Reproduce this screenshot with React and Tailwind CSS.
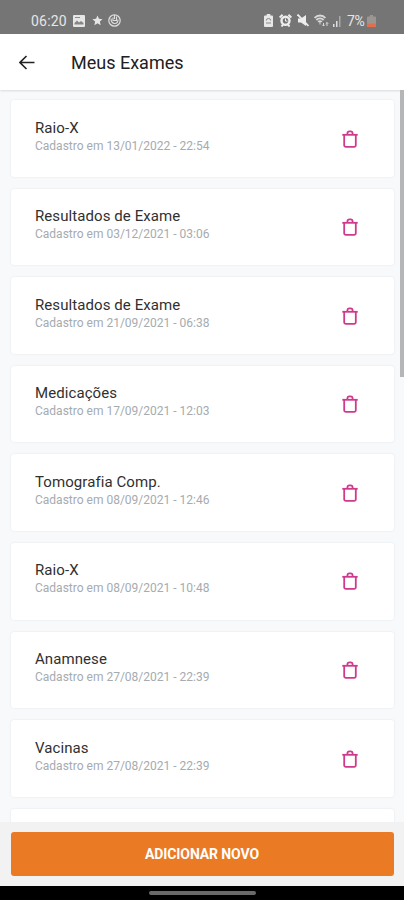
const exams = [
  { id: 1, title: "Raio-X", date: "13/01/2022 - 22:54" },
  { id: 2, title: "Resultados de Exame", date: "03/12/2021 - 03:06" },
  { id: 3, title: "Resultados de Exame", date: "21/09/2021 - 06:38" },
  { id: 4, title: "Medicações", date: "17/09/2021 - 12:03" },
  { id: 5, title: "Tomografia Comp.", date: "08/09/2021 - 12:46" },
  { id: 6, title: "Raio-X", date: "08/09/2021 - 10:48" },
  { id: 7, title: "Anamnese", date: "27/08/2021 - 22:39" },
  { id: 8, title: "Vacinas", date: "27/08/2021 - 22:39" },
];

const TrashIcon = () => (
  <svg width="16" height="18" viewBox="0 0 16 18" fill="none" stroke="#cf3a8c" strokeWidth="1.8">
    <path d="M0.3 4.8h15.4" />
    <path d="M2.2 4.8v10.4a1.6 1.6 0 0 0 1.6 1.6h8.4a1.6 1.6 0 0 0 1.6-1.6V4.8" />
    <path d="M5.4 4.6V3.4a2.1 2.1 0 0 1 2.1-2.1h1a2.1 2.1 0 0 1 2.1 2.1v1.2" />
  </svg>
);

const StatusBar = () => (
  <div className="h-[34px] shrink-0 bg-[#757575] pl-[31px] pr-[28px] pt-[7px] flex items-center justify-between text-[#e6e6e6]">
    <div className="flex items-center">
      <span className="w-[37px] text-[14px] leading-none tracking-[0.2px]">06:20</span>
      {/* gallery */}
      <svg className="ml-[5px]" width="12" height="12" viewBox="0 0 12 12">
        <rect width="12" height="12" rx="1" fill="#e6e6e6" />
        <path d="M1.5 9.5V8L4 5.5l2 2L8 6l2.5 2v1.5z" fill="#858585" />
        <path d="M2 2.5h5" stroke="#8a8a8a" />
      </svg>
      {/* star */}
      <svg className="ml-[7px]" width="11" height="11" viewBox="0 0 12 12" fill="#e6e6e6">
        <path d="M6 .5l1.6 3.6 3.9.4-2.9 2.7.8 3.9L6 9.1l-3.4 2 .8-3.9L.5 4.5l3.9-.4z" />
      </svg>
      <svg className="ml-[5px]" width="13" height="13" viewBox="0 0 13 13" fill="none" stroke="#dedede">
        <circle cx="6.5" cy="6.5" r="5.7" strokeWidth="1.2" />
        <path d="M3 4.500c0 3 1.500 5 3.500 5s3.500-1.500 3.500-4M5 3.500v3h3.500v-4M6.500 1v4" strokeWidth="1.1" />
      </svg>
    </div>

    <div className="flex items-center">
      {/* battery saver */}
      <svg width="9" height="13" viewBox="0 0 9 13">
        <path d="M2.7 0h3.6v1.5H8A1 1 0 0 1 9 2.5V12a1 1 0 0 1-1 1H1a1 1 0 0 1-1-1V2.5a1 1 0 0 1 1-1h1.7z" fill="#e8e8e8" />
        <path d="M2.3 6.5a2.2 2 0 0 1 4.4 0M2 9h5" fill="none" stroke="#888" />
      </svg>
      {/* alarm */}
      <svg className="ml-[6px]" width="13" height="13" viewBox="0 0 13 13">
        <path d="M.6 3.5L3.6.8M12.4 3.5L9.4.8M2.5 12.5l1.5-2M10.5 12.5l-1.5-2" stroke="#ededed" strokeWidth="2" />
        <circle cx="6.5" cy="6.8" r="4" fill="#757575" stroke="#ededed" strokeWidth="2.4" />
        <path d="M6.5 4.5v2.6h2" fill="none" stroke="#ededed" />
      </svg>
      {/* muted */}
      <svg className="ml-[5px]" width="12" height="13" viewBox="0 0 12 13">
        <path d="M1 4.5h3L9 1v11L4 8.5H1z" fill="#ededed" />
        <path d="M.5.5L11.5 12" stroke="#ededed" strokeWidth="1.8" />
      </svg>
      {/* wifi */}
      <svg className="ml-[5px]" width="15" height="13" viewBox="0 0 15 13" fill="none" stroke="#d9d9d9">
        <path d="M.6 4C3.5.6 8.500.6 11.400 4M2.400 6c2-2.200 5.200-2.200 7.200 0M4.300 8c1-1.200 2.400-1.200 3.400 0" strokeWidth="1.9" />
        <path d="M6 8v2.500M9.500 12V9M8.300 10.800l1.200 1.200 1.200-1.200M13 12V8.500M11.800 9.700L13 8.500l1.200 1.200" />
      </svg>
      {/* signal */}
      <svg className="ml-[4px]" width="8" height="12" viewBox="0 0 8 12">
        <path d="M0 9h1.5v3H0zM3 6h1.5v6H3z" fill="#dedede" />
        <path d="M6 1h1.5v11H6z" fill="#a8a8a8" />
      </svg>
      <span className="ml-[6px] w-[20px] text-[14px] leading-none tracking-[-0.3px]">7%</span>
      <svg width="9" height="12" viewBox="0 0 9 12">
        <path d="M3 0h3v1.5h2A1 1 0 0 1 9 2.5V12H0V2.5a1 1 0 0 1 1-1h2z" fill="#9c9693" />
        <path d="M0 8.5h9V11a1 1 0 0 1-1 1H1a1 1 0 0 1-1-1z" fill="#e06f50" />
      </svg>
    </div>
  </div>
);

const ExamCard = ({ exam }) => (
  <div className="h-[76.6px] shrink-0 bg-white rounded-[3px] shadow-[0_0_2px_rgba(60,80,100,0.12)] pl-6 pr-[36px] flex items-start justify-between">
    <div className="pt-[18.5px]">
      <p className="text-[15px] leading-[18px] tracking-[0.08px] text-[#303030]">{exam.title}</p>
      <p className="text-[12px] leading-[18px] text-[#a5abb0]">
        Cadastro em {exam.date}
      </p>
    </div>
    <button className="mt-[29.5px]">
      <TrashIcon />
    </button>
  </div>
);

export default function App() {
  return (
    <div className="w-full h-[900px] flex flex-col overflow-hidden bg-[#f7f9fb] font-[Roboto,sans-serif]">
      <StatusBar />

      <header className="h-[56px] shrink-0 bg-white flex items-center pl-[19px] shadow-[0_1px_2px_rgba(0,0,0,0.12)]">
        <svg width="16" height="15" viewBox="0 0 16 15" fill="none" stroke="#222" strokeWidth="1.6">
          <path d="M15.500 7.500H1.200M7.500 1L1 7.500 7.500 14" />
        </svg>
        <h1 className="ml-[36px] pt-px text-[18px] leading-6 text-[#202020]">Meus Exames</h1>
      </header>

      <div className="h-[732px] shrink-0 flex overflow-hidden">
        <main className="flex-1 pl-[11px] pr-[6px] pt-[10px] flex flex-col gap-[12px] overflow-hidden">
          {exams.map((exam) => (
            <ExamCard key={exam.id} exam={exam} />
          ))}
          <div className="h-[76.6px] shrink-0 bg-white rounded-[3px] shadow-[0_0_2px_rgba(60,80,100,0.12)]" />
        </main>
        <div className="w-[4px] h-[287px] bg-[#b5b6b8]" />
      </div>

      <footer className="h-[64px] shrink-0 bg-[#f2f2f2] px-[10.5px] pt-[10px]">
        <button className="w-full h-[44px] rounded-[3px] bg-[#ea7a24] text-white text-[14px] leading-5 tracking-[-0.1px] font-bold">
          ADICIONAR NOVO
        </button>
      </footer>
      <div className="h-[14px] shrink-0 bg-black flex justify-center pt-[5px]">
        <div className="w-[107px] h-[4px] rounded-full bg-[#6a6a6a]" />
      </div>
    </div>
  );
}
